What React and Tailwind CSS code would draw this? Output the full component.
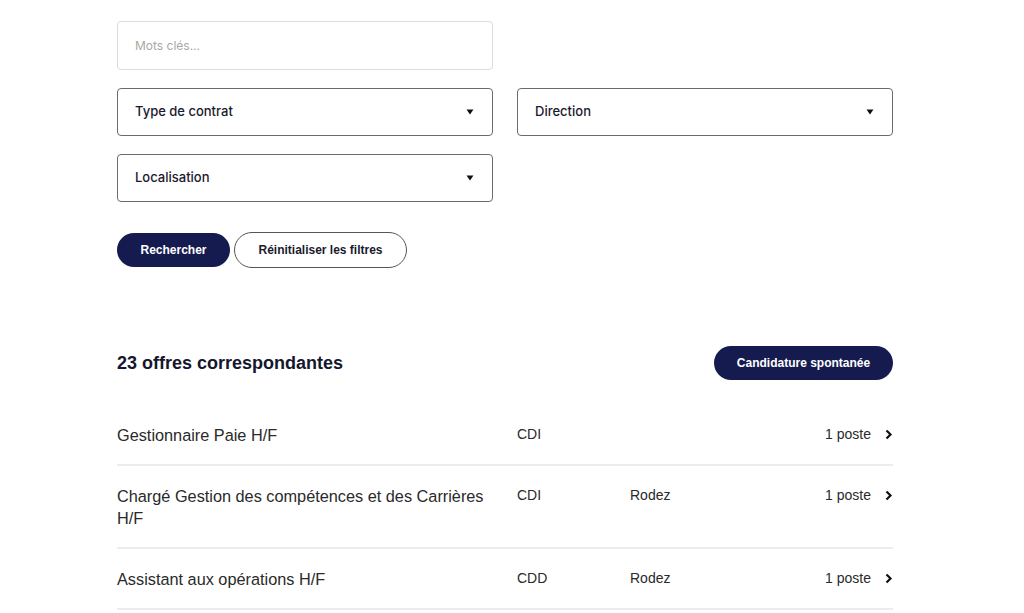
import { useState } from "react";

const offers = [
  { title: "Gestionnaire Paie H/F", contract: "CDI", place: "", count: "1 poste" },
  {
    title: "Chargé Gestion des compétences et des Carrières H/F",
    contract: "CDI",
    place: "Rodez",
    count: "1 poste",
  },
  { title: "Assistant aux opérations H/F", contract: "CDD", place: "Rodez", count: "1 poste" },
];

function SelectBox({ label }) {
  return (
    <button
      type="button"
      className="flex h-[48px] w-full items-center justify-between rounded-[4px] border border-[#6b6b6b] bg-white pl-[17px] pr-[17px] text-left"
    >
      <span className="font-['Inter',sans-serif] text-[13px] font-medium text-[#1a1a2e]">{label}</span>
      <svg width="8" height="6" viewBox="0 0 8 6" className="mr-[1px]">
        <path d="M0.5 0.5h7L4 5.5z" fill="#111" />
      </svg>
    </button>
  );
}

function Chevron() {
  return (
    <svg width="8" height="11" viewBox="0 0 8 11">
      <path d="M1.5 1.5L5.5 5.5L1.5 9.5" fill="none" stroke="#111" strokeWidth="2.2" />
    </svg>
  );
}

export default function App() {
  const [keywords, setKeywords] = useState("");

  return (
    <div className="min-h-[613px] bg-white font-['Liberation_Sans',Arial,sans-serif]">
      <div className="w-[776px] pt-[21px] ml-[117px]">
        <div className="grid grid-cols-2 gap-x-[24px] gap-y-[18px]">
          <input
            type="text"
            placeholder="Mots clés..."
            value={keywords}
            onChange={(e) => setKeywords(e.target.value)}
            className="h-[49px] w-full rounded-[4px] border border-[#dcdcdc] px-[17px] font-['Inter',sans-serif] text-[12px] text-[#222] placeholder:text-[#a8a8a8] outline-none"
          />
          <div />
          <SelectBox label="Type de contrat" />
          <SelectBox label="Direction" />
          <SelectBox label="Localisation" />
        </div>

        <div className="mt-[30px] flex items-center gap-[4px]">
          <button className="h-[34px] w-[113px] rounded-full bg-[#161b4f] text-[12px] font-bold text-white">
            Rechercher
          </button>
          <button className="h-[36px] w-[173px] rounded-full border border-[#555] bg-white text-[12px] font-bold text-[#1a1a2e]">
            Réinitialiser les filtres
          </button>
        </div>

        <div className="mt-[78px] flex items-center justify-between">
          <h2 className="text-[18px] font-bold text-[#14172e]">23 offres correspondantes</h2>
          <button className="h-[34px] w-[179px] rounded-full bg-[#161b4f] text-[12px] font-bold text-white">
            Candidature spontanée
          </button>
        </div>

        <ul className="mt-[25px]">
          {offers.map((offer) => (
            <li
              key={offer.title}
              className="grid grid-cols-[400px_113px_1fr_auto] items-start border-b-2 border-[#ececec] pt-[19px] pb-[18px]"
            >
              <span className="pr-[30px] text-[16.3px] leading-[22px] text-[#2a2a2a]">{offer.title}</span>
              <span className="text-[14px] leading-[20px] text-[#2a2a2a]">{offer.contract}</span>
              <span className="text-[14px] leading-[20px] text-[#2a2a2a]">{offer.place}</span>
              <span className="flex items-center gap-[14px] text-[14px] leading-[20px] text-[#2a2a2a]">
                {offer.count}
                <Chevron />
              </span>
            </li>
          ))}
        </ul>
      </div>
    </div>
  );
}
